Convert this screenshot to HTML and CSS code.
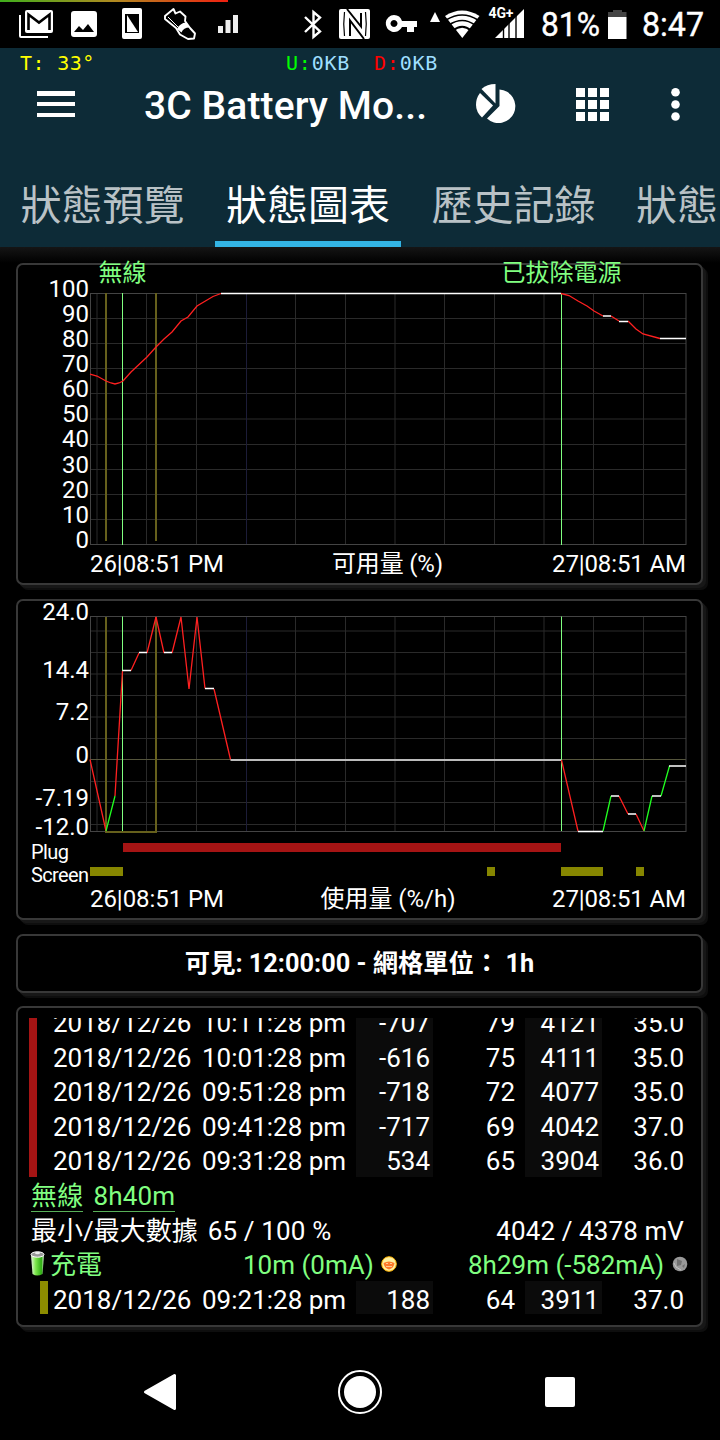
FILE: index.html
```html
<!DOCTYPE html>
<html lang="zh-Hant">
<head>
    <meta charset="UTF-8">
    <meta name="viewport" content="width=device-width, initial-scale=1.0">
    <title>3C Battery Monitor</title>
    <link rel="stylesheet" href="styles.css">
</head>
<body>
    <header class="status-bar">
        <div class="cpu-line"></div>
        <svg class="status-icons" width="720" height="48" viewBox="0 0 720 48" fill="#fff">
            <!-- mail -->
            <path d="M19 15h2v21h27v2H21q-2 0-2-2z"/>
            <rect x="25" y="10" width="28" height="23" rx="2"/>
            <path d="M28.500 30V14.500L39 22.500L49.500 14.500V30" fill="none" stroke="#000" stroke-width="2.600"/>
            <!-- picture -->
            <path fill-rule="evenodd" d="M74 11h20q3 0 3 3v20q0 3-3 3H74q-3 0-3-3V14q0-3 3-3zM74 32h20l-6-8-5 6-4-4z"/>
            <!-- phone -->
            <path fill-rule="evenodd" d="M124 8h16q2 0 2 2v27q0 2-2 2h-16q-2 0-2-2V10q0-2 2-2zM125 14v19h14V14z"/>
            <path d="M127 15v17h11z"/>
            <!-- shoe -->
            <path d="M165 16L173.500 9L175.500 13.500L180 11.500L185.500 16.500L185 21L190 28L195 33.500L194 38.500L188 39L180 34.500L176 28L165 19z" fill="none" stroke="#fff" stroke-width="1.900" stroke-linejoin="round"/>
            <path d="M168 17l10 10" fill="none" stroke="#fff" stroke-width="1"/>
            <path d="M177 29q3-6 9-6.500l3.500 5q-6 0-8 5z"/>
            <!-- bars -->
            <path d="M218 26h5v7h-5zM225.500 20h5v13h-5zM233 15h5v18h-5z" fill="#eee"/>
            <!-- bluetooth -->
            <path d="M305 17L320 31.500L313.500 37V12L320 17.500L305 32" fill="none" stroke="#fff" stroke-width="2.400"/>
            <!-- nfc -->
            <rect x="339" y="9" width="31" height="30" rx="2"/>
            <path d="M347 9L361 26.500V13" fill="none" stroke="#000" stroke-width="2"/>
            <path d="M350 36V20.500L364 39" fill="none" stroke="#000" stroke-width="2"/>
            <path d="M344.500 12q-1.500 12 0 24M365.500 12q1.500 12 0 24" fill="none" stroke="#000" stroke-width="1.200"/>
            <!-- vpn key -->
            <path fill-rule="evenodd" d="M394 15a8.500 8.500 0 0 1 8 6h15v6h-3v5h-7v-5h-5a8.500 8.500 0 1 1-8-12zM394 20a3.500 3.500 0 1 0 .01 0z"/>
            <path d="M435 12l5 10h-10z"/>
            <!-- wifi -->
            <path d="M445 16Q462 5 479.500 16L462.300 38z"/>
            <path d="M446 20Q462.300 10 478 20M449 25Q462.300 16 475 25M453 30.500Q462.300 23 471 30.500" fill="none" stroke="#000" stroke-width="1.700"/>
            <text x="488.500" y="18" class="net-type" textLength="25">4G+</text>
            <path d="M495 38L524 9v29z"/>
            <path d="M503.500 25v14M509 20v19M516 14v25" stroke="#000" stroke-width="1.400"/>
            <text x="541" y="36" class="status-text" textLength="59" lengthAdjust="spacingAndGlyphs">81%</text>
            <path d="M608 17V12h5V10h9v2h4.500v5z" fill="#444"/>
            <path d="M608 17h18.500v22H608z"/>
            <text x="642" y="36" class="status-text" textLength="62" lengthAdjust="spacingAndGlyphs">8:47</text>
        </svg>
    </header>

    <section class="app-header">
        <div class="monitor-line">
            <span class="temp">T: 33°</span>
            <span class="net up"><b>U:</b>0KB</span>
            <span class="net down"><b>D:</b>0KB</span>
        </div>
        <div class="toolbar">
            <svg class="menu-icon" width="38" height="28" viewBox="0 0 38 28" fill="#fff">
                <path d="M0 0h38v5H0zM0 11h38v4H0zM0 22h38v4H0z"/>
            </svg>
            <h1>3C Battery Mo...</h1>
            <svg class="pie-icon" width="40" height="40" viewBox="0 0 40 40" fill="#fff">
                <path d="M19.500 0V19.500L5.500 5Q11 0 19.500 0z"/>
                <path d="M4 9L17 21.500L6 33.500Q0 28 0 21Q0 14 4 9z"/>
                <path d="M23.500 5.500A16.800 16.800 0 1 1 11 34.500L23.500 22z"/>
            </svg>
            <svg class="grid-icon" width="33" height="33" viewBox="0 0 33 33" fill="#fff">
                <path d="M0 0h9v9H0zM12 0h9v9h-9zM24 0h9v9h-9zM0 12h9v9H0zM12 12h9v9h-9zM24 12h9v9h-9zM0 24h9v9H0zM12 24h9v9h-9zM24 24h9v9h-9z"/>
            </svg>
            <svg class="more-icon" width="9" height="33" viewBox="0 0 9 33" fill="#fff">
                <circle cx="4.500" cy="4.300" r="4.300"/>
                <circle cx="4.500" cy="16.500" r="4.300"/>
                <circle cx="4.500" cy="28.500" r="4.300"/>
            </svg>
        </div>
        <nav class="tabs">
            <a class="tab">狀態預覽</a>
            <a class="tab active">狀態圖表</a>
            <a class="tab">歷史記錄</a>
            <a class="tab">狀態</a>
        </nav>
    </section>

    <main>
        <!-- battery level -->
        <div class="panel chart-panel">
            <svg class="chart" width="684" height="318" viewBox="18 265 684 318">
                <g class="grid">
                    <path d="M90 318.500H686M90 343.500H686M90 368.500H686M90 393.500H686M90 419H686M90 444.500H686M90 469.500H686M90 494.500H686M90 519.500H686"/>
                    <path d="M97 293V544M146.500 293V544M196.500 293V544M295.500 293V544M345.500 293V544M395 293V544M444.500 293V544M494.500 293V544M544 293V544M593.500 293V544M643.500 293V544"/>
                </g>
                <path class="midnight" d="M246.500 294V544"/>
                <rect class="frame" x="90.500" y="293.500" width="595.500" height="251"/>
                <path class="screen-on" d="M106 293V541M156 293V541"/>
                <path class="plug" d="M122.500 293V545M561.500 293V545"/>
                <path class="down" d="M90 374L97 376L106 381L111 383L115 384L119 383L123 381L131 372L147 357L156 347L164 339L172 332L181 321L188 317L197 306L213 296.500L221 293.500"/>
                <path class="flat" d="M221 293.500H561"/>
                <path class="down" d="M561 293.500L569 295.500L578 301L587 306L594 311L603 316M611 316L619 321M628 321L636 329L643 334L660 338.500"/>
                <path class="flat" d="M603 316H611M619 321.500H628M660 338.500H686"/>
                <g class="y-axis">
                    <text x="89" y="297">100</text>
                    <text x="89" y="321.500">90</text>
                    <text x="89" y="346.500">80</text>
                    <text x="89" y="372">70</text>
                    <text x="89" y="397">60</text>
                    <text x="89" y="422">50</text>
                    <text x="89" y="447">40</text>
                    <text x="89" y="472.500">30</text>
                    <text x="89" y="498">20</text>
                    <text x="89" y="523">10</text>
                    <text x="89" y="548">0</text>
                </g>
                <text class="event" x="98.500" y="281">無線</text>
                <text class="event" x="501.500" y="281">已拔除電源</text>
                <g class="x-axis">
                    <text x="90" y="572" textLength="134">26|08:51 PM</text>
                    <text x="332" y="572" textLength="111">可用量 (%)</text>
                    <text x="552" y="572" textLength="134">27|08:51 AM</text>
                </g>
            </svg>
        </div>

        <!-- usage -->
        <div class="panel chart-panel">
            <svg class="chart" width="684" height="317" viewBox="18 601 684 317">
                <g class="grid">
                    <path d="M90 631H686M90 652.500H686M90 674H686M90 695.500H686M90 717H686M90 738.500H686M90 781.500H686M90 802.500H686M90 824.500H686"/>
                    <path d="M97 616V831M146.500 616V831M196.500 616V831M295.500 616V831M345.500 616V831M395 616V831M444.500 616V831M494.500 616V831M544 616V831M593.500 616V831M643.500 616V831"/>
                </g>
                <path class="midnight" d="M246.500 617V831"/>
                <path class="zero" d="M90 759.500H686"/>
                <rect class="frame" x="90.500" y="616.500" width="595.500" height="215"/>
                <path class="screen-on" d="M106 617V832H156V617"/>
                <path class="plug" d="M122.500 616.500V831M561.500 616.500V831"/>
                <path class="down" d="M90 759.500L106 831M115 796L122.500 671M131 670.500L139 653M147 653L156 617L164 653M172 653L181 617L189 689L197 617L205 688.500M214 689L230.500 759.500M561.500 760L578 831M619 796L628 814M636 814L644 831"/>
                <path class="up" d="M106 831L115 796M603 831L611 796M644 831L652 796M661 796L669.500 766"/>
                <path class="flat" d="M122.500 670.500H131M139 652.500H147M164 652.500H172M205 688.500H214M578 831.500H603M611 796H619M628 814H636M652 796H661M669 766H686"/>
                <path class="flat idle" d="M230.500 760H561"/>
                <rect class="plug-bar" x="123" y="843" width="438" height="9"/>
                <path class="screen-bar" d="M90 867h33v9H90zM487 867h8v9h-8zM561 867h42v9h-42zM636 867h8v9h-8z"/>
                <g class="y-axis">
                    <text x="89" y="620">24.0</text>
                    <text x="89" y="677.500">14.4</text>
                    <text x="89" y="720">7.2</text>
                    <text x="89" y="763">0</text>
                    <text x="89" y="806">-7.19</text>
                    <text x="89" y="835">-12.0</text>
                </g>
                <text class="lane" x="31" y="858.500" textLength="38">Plug</text>
                <text class="lane" x="31" y="882" textLength="58">Screen</text>
                <g class="x-axis">
                    <text x="90" y="907" textLength="134">26|08:51 PM</text>
                    <text x="320.500" y="907" textLength="135">使用量 (%/h)</text>
                    <text x="552" y="907" textLength="134">27|08:51 AM</text>
                </g>
            </svg>
        </div>

        <div class="panel range-panel">可見: 12:00:00 - 網格單位： 1h</div>

        <div class="panel list-panel">
            <div class="list">
                <div class="row plugged"><span>2018/12/26</span><span>10:11:28 pm</span><span>-707</span><span>79</span><span>4121</span><span>35.0</span></div>
                <div class="row plugged"><span>2018/12/26</span><span>10:01:28 pm</span><span>-616</span><span>75</span><span>4111</span><span>35.0</span></div>
                <div class="row plugged"><span>2018/12/26</span><span>09:51:28 pm</span><span>-718</span><span>72</span><span>4077</span><span>35.0</span></div>
                <div class="row plugged"><span>2018/12/26</span><span>09:41:28 pm</span><span>-717</span><span>69</span><span>4042</span><span>37.0</span></div>
                <div class="row plugged"><span>2018/12/26</span><span>09:31:28 pm</span><span>534</span><span>65</span><span>3904</span><span>36.0</span></div>
                <div class="info title"><u>無線</u><u>8h40m</u></div>
                <div class="info"><span>最小/最大數據</span><span class="minmax">65 / 100 %</span><span class="right">4042 / 4378 mV</span></div>
                <div class="info charge">
                    <svg width="15" height="26" viewBox="0 0 15 26">
                        <defs>
                            <linearGradient id="cell">
                                <stop offset="0" stop-color="#e8f5e0"/>
                                <stop offset=".35" stop-color="#7fe84f"/>
                                <stop offset=".8" stop-color="#2fae13"/>
                                <stop offset="1" stop-color="#dff0d8"/>
                            </linearGradient>
                        </defs>
                        <path d="M1 4L2.500 23Q7 26 12.500 23L14 4z" fill="url(#cell)"/>
                        <ellipse cx="7.500" cy="3.500" rx="6.500" ry="2.700" fill="#999" stroke="#fff"/>
                        <ellipse cx="7.500" cy="2" rx="2.500" ry="1.200" fill="#eee"/>
                    </svg>
                    <span class="state">充電</span>
                    <span class="on-time">10m (0mA)</span>
                    <svg width="16" height="16" viewBox="0 0 16 16">
                        <circle cx="8" cy="8" r="7.300" fill="#fff0a0" stroke="#ffb400"/>
                        <path d="M2.500 7Q8 4 13.500 7Q13 12 8 13.500Q3 12 2.500 7z" fill="#ff7a2a"/>
                        <path d="M5 7.500h2M9 7.500h2M5 10.500h6" stroke="#ffc890"/>
                    </svg>
                    <span class="off-time">8h29m (-582mA)</span>
                    <svg width="16" height="16" viewBox="0 0 16 16">
                        <circle cx="8" cy="8" r="7.300" fill="#999"/>
                        <path d="M5 3l5 2-1 4-4 1zM10 10l3-2-1 4z" fill="#707070"/>
                        <path d="M2 7l2 4 5 3" fill="none" stroke="#c4c4c4"/>
                    </svg>
                </div>
                <div class="row screen"><span>2018/12/26</span><span>09:21:28 pm</span><span>188</span><span>64</span><span>3911</span><span>37.0</span></div>
            </div>
        </div>
    </main>

    <footer class="nav-bar">
        <svg width="34" height="38" viewBox="0 0 34 38"><path d="M2.500 19L31.500 2.500V35.500z" fill="#fff" stroke="#fff" stroke-width="3" stroke-linejoin="round"/></svg>
        <svg width="44" height="44" viewBox="0 0 44 44"><circle cx="22" cy="22" r="21" fill="none" stroke="#fff" stroke-width="2"/><circle cx="22" cy="22" r="16" fill="#fff"/></svg>
        <svg width="30" height="30" viewBox="0 0 30 30"><rect width="30" height="30" rx="2" fill="#fff"/></svg>
    </footer>
</body>
</html>
```

FILE: styles.css
```css
* {
    box-sizing: border-box;
}

body {
    margin: 0;
    width: 720px;
    height: 1440px;
    overflow: hidden;
    background: #000;
    color: #fff;
    font-family: Roboto, "Noto Sans CJK TC", sans-serif;
    display: flex;
    flex-direction: column;
}

svg {
    display: block;
    flex: none;
}

/* status bar */
.status-bar {
    position: relative;
    height: 48px;
}

.cpu-line {
    position: absolute;
    top: 0;
    left: 0;
    width: 228px;
    height: 2px;
    background: linear-gradient(90deg, #3fae1c, #b08a20 50%, #f02010);
}

.status-text {
    font-size: 33px;
    stroke: #fff;
    stroke-width: 0.400px;
}

.net-type {
    font-size: 14px;
    font-weight: 700;
}

/* header */
.app-header {
    height: 199px;
    background: #0d2b37;
    overflow: hidden;
}

.monitor-line {
    height: 29px;
    display: flex;
    padding-left: 20px;
    font: 20px/30px "DejaVu Sans Mono", monospace;
    white-space: pre;
}

.monitor-line b {
    font-weight: 400;
}

.temp {
    width: 266px;
    color: #ff0;
    letter-spacing: 0.400px;
}

.net {
    width: 88px;
    color: #9fdfff;
    letter-spacing: 0.8px;
}

.up b {
    color: #0f0;
}

.down b {
    color: #f00;
}

.toolbar {
    height: 56px;
    display: flex;
    align-items: center;
    padding-left: 37px;
}

h1 {
    margin: 1px 0 0 69px;
    width: 333px;
    font-size: 39px;
    font-weight: 500;
    line-height: 56px;
    letter-spacing: 0.100px;
    white-space: nowrap;
}

.menu-icon {
    margin-top: -1px;
}

.pie-icon {
    margin: -2px 0 0 -1px;
}

.grid-icon {
    margin: -2px 0 0 60px;
}

.more-icon {
    margin: -2px 0 0 62px;
}

.tabs {
    display: flex;
    gap: 19.500px;
    height: 114px;
    padding-left: 9.500px;
}

.tab {
    flex: none;
    width: 186px;
    height: 114px;
    padding-top: 42px;
    font-size: 41px;
    line-height: 62px;
    text-align: center;
    color: #b9c2c6;
    border-bottom: 6px solid transparent;
}

.tab.active {
    color: #fff;
    border-color: #33b5e5;
}

.tab:last-child {
    padding-left: 10px;
    text-align: left;
}

/* panels */
main {
    height: 1097px;
    padding: 16px 16px 0;
    background: linear-gradient(#151515, #000 16px);
}

.panel {
    width: 687px;
    border: 2px solid #383838;
    border-radius: 7px;
    background: #000;
    box-shadow: 3px 3px 0 #171717, 5px 5px 0 #0e0e0e;
}

.chart-panel {
    height: 322px;
    margin-bottom: 14px;
}

.chart-panel + .chart-panel {
    height: 321px;
}

.chart {
    overflow: visible;
    fill: none;
}

.chart text {
    fill: #fff;
    font-size: 24px;
}

.chart .event {
    fill: #80ff80;
}

.chart .lane {
    font-size: 20px;
}

.y-axis {
    text-anchor: end;
}

.grid {
    stroke: #2a2a2a;
}

.frame {
    stroke: #444;
}

.midnight {
    stroke: #1c1c38;
}

.zero {
    stroke: #55553c;
}

.screen-on {
    stroke: #66601c;
    stroke-width: 2;
}

.plug {
    stroke: #80ff80;
}

.down {
    stroke: #ff2020;
    stroke-width: 1.300;
}

.up {
    stroke: #20ff20;
    stroke-width: 1.300;
}

.flat {
    stroke: #fff;
    stroke-width: 1.300;
}

.idle {
    stroke: #bbb;
    stroke-width: 2;
}

.plug-bar {
    fill: #a51414;
}

.screen-bar {
    fill: #868600;
}

.range-panel {
    height: 59px;
    margin-bottom: 13px;
    font-size: 25.300px;
    font-weight: 700;
    line-height: 56px;
    text-align: center;
}

.list-panel {
    height: 321px;
    padding: 9.500px 0 0 11px;
}

/* history list */
.list {
    height: 299px;
    overflow: hidden;
    font-size: 26px;
}

.list > :first-child {
    margin-top: -13.500px;
}

.row {
    display: grid;
    grid-template-columns: 149px 154px 77px 92px 77px 83px;
    grid-template-rows: 100%;
    height: 34.600px;
    padding-left: 16px;
    border-left: 8px solid #a51414;
    line-height: 38px;
    white-space: nowrap;
}

.row span:nth-child(n+3) {
    padding-right: 3px;
    text-align: right;
}

.row span:nth-child(4) {
    padding-right: 10px;
}

.row span:nth-child(6) {
    padding-right: 1px;
}

.row span:nth-child(3),
.row span:nth-child(5) {
    background: #0b0b0b;
}

.screen {
    height: 33.500px;
    margin-left: 11px;
    padding-left: 5px;
    border-left-color: #8c8c00;
}

.info {
    display: flex;
    height: 34.600px;
    padding-left: 2px;
    line-height: 38px;
    white-space: nowrap;
}

.info u {
    height: 35px;
    margin-right: 10px;
    text-decoration: none;
    letter-spacing: 0.200px;
    border-bottom: 1px solid #58b058;
}

.title,
.charge {
    color: #80ff80;
}

.minmax {
    margin-left: 10px;
    letter-spacing: 0.150px;
}

.right {
    margin-left: auto;
    margin-right: 17px;
    letter-spacing: 0.100px;
}

.charge {
    padding-left: 1px;
}

.charge svg {
    margin-top: 10px;
}

.charge svg:first-child {
    margin-top: 5px;
}

.state {
    width: 193px;
    margin-left: 5px;
}

.on-time {
    width: 138px;
}

.off-time {
    margin-left: 71px;
    width: 204px;
}

/* navigation */
.nav-bar {
    height: 96px;
    display: flex;
    align-items: center;
    justify-content: space-between;
    padding: 0 145px 0 143px;
}

.nav-bar svg:nth-child(2) {
    margin-left: -2px;
}
```
